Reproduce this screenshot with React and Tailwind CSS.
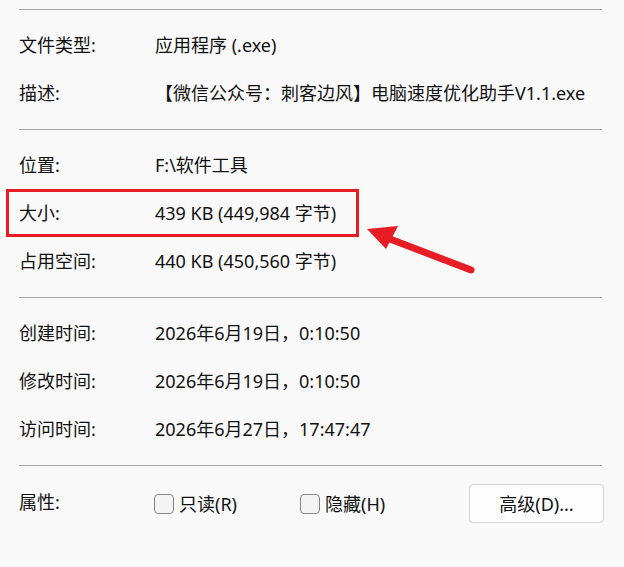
import React from 'react';

// File properties sheet: grouped info rows split by thin rules, then the attribute checkboxes.
const groups = [
  [
    { label: '文件类型:', value: '应用程序 (.exe)' },
    { label: '描述:', value: '【微信公众号：刺客边风】电脑速度优化助手V1.1.exe' },
  ],
  [
    { label: '位置:', value: 'F:\\软件工具' },
    { label: '大小:', value: '439 KB (449,984 字节)', marked: true },
    { label: '占用空间:', value: '440 KB (450,560 字节)' },
  ],
  [
    { label: '创建时间:', value: '2026年6月19日，0:10:50' },
    { label: '修改时间:', value: '2026年6月19日，0:10:50' },
    { label: '访问时间:', value: '2026年6月27日，17:47:47' },
  ],
];

function Rule() {
  return <div className="h-px bg-[#a3a3a3]" />;
}

function InfoRow({ label, value, marked }) {
  return (
    <div className="relative flex h-[48px] items-center">
      <span className="w-[136px] shrink-0">{label}</span>
      <span className="whitespace-nowrap">{value}</span>
      {marked && (
        <span className="pointer-events-none absolute left-[-13px] top-0 h-[48px] w-[353px] border-[3px] border-[#e81c24]" />
      )}
    </div>
  );
}

function CheckBox({ label, className = '' }) {
  return (
    <label className={`flex items-center gap-[5px] ${className}`}>
      <span className="h-[20px] w-[20px] rounded-[4px] border border-[#868686] bg-[#f3f3f3]" />
      <span>{label}</span>
    </label>
  );
}

export default function App() {
  return (
    <div className="relative h-[567px] w-[624px] overflow-hidden bg-[#f9f9f9] pl-[19px] pr-[22px] pt-[9px] font-['Noto_Sans','Noto_Sans_CJK_SC',sans-serif] text-[18px] leading-none text-[#111]">
      {groups.map((rows, i) => (
        <div key={i}>
          <Rule />
          <div className="pb-[12px] pt-[11px]">
            {rows.map((r) => (
              <InfoRow key={r.label} {...r} />
            ))}
          </div>
        </div>
      ))}
      <Rule />

      <div className="mr-[-2px] mt-[18px] flex h-[39px] items-center">
        <span className="w-[135px] shrink-0 -translate-y-[2px]">属性:</span>
        <CheckBox label="只读(R)" className="w-[146px] shrink-0" />
        <CheckBox label="隐藏(H)" />
        <button
          type="button"
          className="ml-auto h-[39px] w-[135px] rounded-[4px] border border-[#d3d3d3] bg-[#fdfdfd] text-[18px] text-[#111]"
        >
          高级(D)...
        </button>
      </div>

      {/* red callout arrow pointing at the size row */}
      <svg className="pointer-events-none absolute left-0 top-0" width="624" height="567" viewBox="0 0 624 567">
        <line x1="390" y1="239" x2="471" y2="270" stroke="#e81c24" strokeWidth="7" strokeLinecap="round" />
        <polygon points="367,229 398,226 386,249" fill="#e81c24" />
      </svg>
    </div>
  );
}
